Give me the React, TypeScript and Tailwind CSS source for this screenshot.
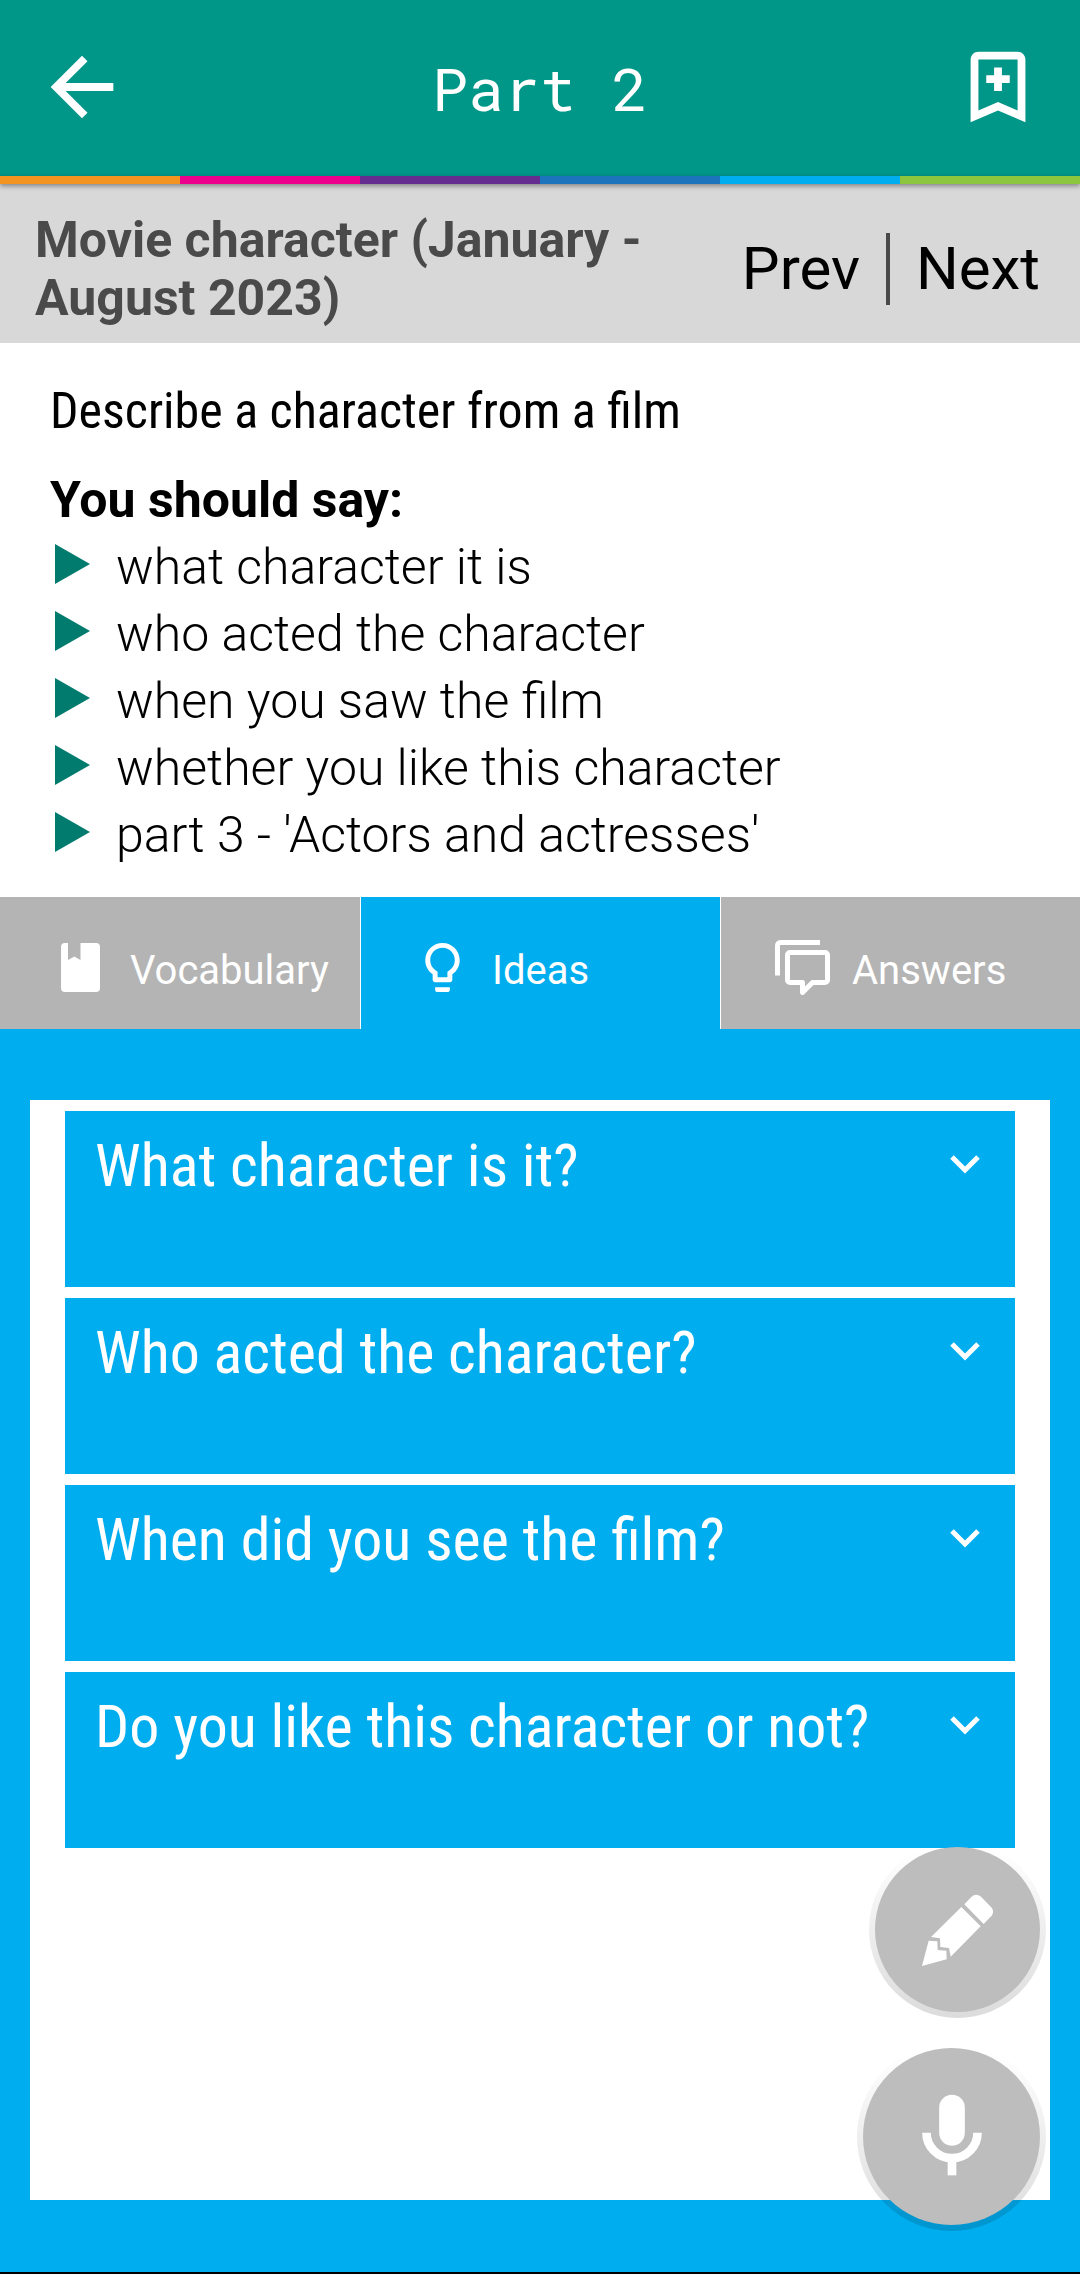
import { useState } from "react";
import type { ReactNode } from "react";

const stripes = ["bg-[#f39320]", "bg-[#ec008c]", "bg-[#662d91]", "bg-[#1c75bc]", "bg-[#00adef]", "bg-[#8cc63f]"];

const points = [
  "what character it is",
  "who acted the character",
  "when you saw the film",
  "whether you like this character",
  "part 3 - 'Actors and actresses'",
];

const questions = [
  "What character is it?",
  "Who acted the character?",
  "When did you see the film?",
  "Do you like this character or not?",
];

function BackIcon() {
  return (
    <svg className="size-[94px]" viewBox="0 0 24 24" fill="currentColor" aria-hidden="true">
      <path d="M20 11H7.83l5.59-5.59L12 4l-8 8 8 8 1.41-1.41L7.83 13H20v-2z" />
    </svg>
  );
}

function BookmarkAddIcon() {
  return (
    <svg className="size-[94px]" viewBox="0 0 24 24" fill="currentColor" aria-hidden="true">
      <path d="M17 3H7c-1.1 0-1.99.9-1.99 2L5 21l7-3 7 3V5c0-1.1-.9-2-2-2zm0 15l-5-2.18L7 18V5h10v13z" />
      <path d="M11 7h2v2h2v2h-2v2h-2v-2H9V9h2z" />
    </svg>
  );
}

function BookIcon() {
  return (
    <svg className="h-[49px] w-[39px]" viewBox="0 0 39 49" fill="currentColor" aria-hidden="true">
      <path d="M4 0h3v17l6.3-3.500 6.200 3.500V0H35a4 4 0 0 1 4 4v41a4 4 0 0 1-4 4H4a4 4 0 0 1-4-4V4a4 4 0 0 1 4-4z" />
    </svg>
  );
}

function BulbIcon() {
  return (
    <svg className="size-[59px]" viewBox="0 0 24 24" fill="currentColor" aria-hidden="true">
      <path d="M9 21c0 .55.45 1 1 1h4c.55 0 1-.45 1-1v-1H9v1zm3-19C8.14 2 5 5.14 5 9c0 2.38 1.19 4.47 3 5.74V17c0 .55.45 1 1 1h6c.55 0 1-.45 1-1v-2.26c1.81-1.27 3-3.36 3-5.74 0-3.86-3.14-7-7-7zm2.85 11.1l-.85.6V16h-4v-2.3l-.85-.6C7.8 12.16 7 10.63 7 9c0-2.76 2.24-5 5-5s5 2.24 5 5c0 1.63-.8 3.16-2.15 4.1z" />
    </svg>
  );
}

function ChatIcon() {
  return (
    <svg
      className="size-[55px]"
      viewBox="0 0 55 55"
      fill="none"
      stroke="currentColor"
      strokeWidth="5"
      strokeLinejoin="round"
      aria-hidden="true"
    >
      <path d="M2.5 35.5V5.5a3 3 0 0 1 3-3H45" />
      <path d="M15 12.5H50a2.5 2.5 0 0 1 2.5 2.5V40a2.5 2.5 0 0 1-2.5 2.5H37.5L27.5 52.5V42.5H15a2.5 2.5 0 0 1-2.5-2.5V15a2.5 2.5 0 0 1 2.5-2.5z" />
    </svg>
  );
}

function PencilIcon() {
  return (
    <svg className="size-[100px]" viewBox="-6 0 300 300" fill="currentColor" aria-hidden="true">
      <path d="M163 73L184 51Q198 38 213 50L243 81Q254 93 246 106L221 132z" />
      <path d="M154 81L212 139L122 230L117 204L91 201L90 175L63 171z" />
      <path d="M56 182L82 184L83 210L109 212L110 238L36 258z" />
    </svg>
  );
}

function MicIcon() {
  return (
    <svg className="size-[90px]" viewBox="320 874 270 270" fill="currentColor" aria-hidden="true">
      <rect x="416.5" y="882" width="77" height="153" rx="38.5" />
      <path d="M378.5 996a76.5 76.5 0 0 0 153 0" fill="none" stroke="currentColor" strokeWidth="26" />
      <rect x="442" y="1075" width="26" height="49" />
    </svg>
  );
}

function Fab({ label, className, children }: { label: string; className: string; children: ReactNode }) {
  return (
    <button aria-label={label} className={`relative ${className}`}>
      <span className="absolute -inset-[6px] rounded-full bg-linear-to-b from-transparent from-5% to-black/14" />
      <span className="relative flex size-full items-center justify-center rounded-full bg-[#bdbdbd] text-white">
        {children}
      </span>
    </button>
  );
}

const tabs = [
  { name: "Vocabulary", icon: <BookIcon /> },
  { name: "Ideas", icon: <BulbIcon /> },
  { name: "Answers", icon: <ChatIcon /> },
];

export default function App() {
  const [active, setActive] = useState("Ideas");

  return (
    <div className="flex min-h-screen flex-col bg-white font-['Roboto',sans-serif] text-black">
      <header className="flex h-44 items-center justify-between bg-[#009688] px-[35px] text-white">
        <button aria-label="Back" className="pb-0.5"><BackIcon /></button>
        <h1 className="font-['Roboto_Mono',monospace] text-[60px] leading-[80px]">Part 2</h1>
        <button aria-label="Add bookmark" className="pb-0.5"><BookmarkAddIcon /></button>
      </header>

      <div className="relative z-10 flex h-2 shadow-[0_2px_5px_rgba(0,0,0,0.4)]">
        {stripes.map((color) => <div key={color} className={`flex-1 ${color}`} />)}
      </div>

      <section className="flex items-center justify-between bg-[#d8d8d8] pt-[27px] pr-10 pb-4 pl-[35px]">
        <h2 className="w-[620px] text-[50px] leading-[58px] font-bold text-[#4a4a4a]">
          Movie character (January - August 2023)
        </h2>
        <nav className="flex items-center text-[60px] leading-[70px]">
          <button>Prev</button>
          <div className="mr-[26px] ml-[26px] h-[72px] w-1 bg-[#4a4a4a]" />
          <button>Next</button>
        </nav>
      </section>

      <section className="px-[50px] pt-[38px] pb-7 text-[50px]">
        <p className="font-['Roboto_Condensed','Roboto',sans-serif] leading-[60px]">Describe a character from a film</p>
        <h3 className="mt-[29px] leading-[60px] font-bold">You should say:</h3>
        <ul className="mt-1">
          {points.map((point) => (
            <li key={point} className="flex gap-[26px] pl-[5px] leading-[67px] font-light">
              <svg className="mt-[10px] h-10 w-[35px] shrink-0" viewBox="0 0 35 40" fill="#007b6e" aria-hidden="true">
                <path d="M0 0L35 20L0 40z" />
              </svg>
              {point}
            </li>
          ))}
        </ul>
      </section>

      <div role="tablist" className="grid grid-cols-3">
        {tabs.map(({ name, icon }) => (
          <button
            key={name}
            role="tab"
            aria-selected={active === name}
            onClick={() => setActive(name)}
            className={`flex h-[132px] items-center gap-5 border-l border-white pl-[51px] text-[40px] leading-[46px] text-white first:border-l-0 first:pl-[50px] ${
              active === name ? "bg-[#00adef]" : "bg-[#b4b4b4]"
            }`}
          >
            <span className="flex w-[60px] justify-center pt-2">{icon}</span>
            <span className="pt-4">{name}</span>
          </button>
        ))}
      </div>

      <main className="relative flex flex-1 flex-col border-b-2 border-black bg-[#00adef] px-[30px] pt-[71px] pb-[72px]">
        <div className="flex flex-1 flex-col gap-[11px] bg-white px-[35px] pt-[11px]">
          {questions.map((question) => (
            <button
              key={question}
              aria-expanded="false"
              className="flex h-44 items-start justify-between bg-[#00adef] pt-5 pr-[35px] pl-[30px] text-left font-['Roboto_Condensed','Roboto',sans-serif] text-[60px] leading-[70px] text-white"
            >
              {question}
              <svg
                className="mt-6 h-[19px] w-[30px] shrink-0"
                viewBox="0 0 30 19"
                fill="none"
                stroke="currentColor"
                strokeWidth="5"
                aria-hidden="true"
              >
                <path d="M2 2L15 15L28 2" />
              </svg>
            </button>
          ))}
        </div>

        <div className="absolute right-10 bottom-[47px] flex flex-col items-end gap-9">
          <Fab label="Write notes" className="size-[165px]"><PencilIcon /></Fab>
          <Fab label="Record" className="size-[177px]"><MicIcon /></Fab>
        </div>
      </main>
    </div>
  );
}
